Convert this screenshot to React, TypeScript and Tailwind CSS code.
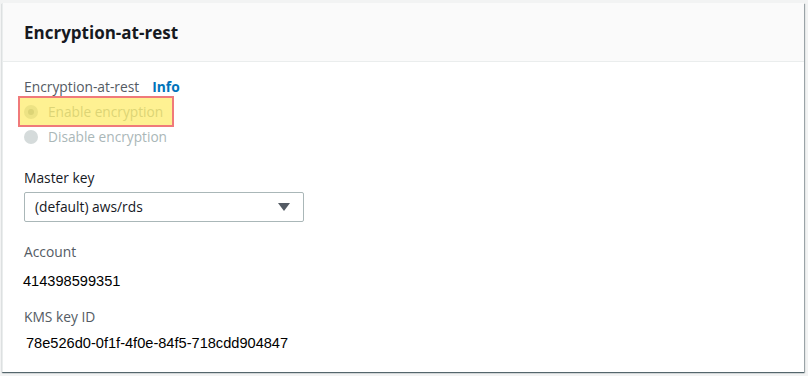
export default function App() {
  return (
    <div className="w-[808px] h-[376px] bg-[#f2f3f3] pl-[2px] pt-[3px] font-['Open_Sans','Liberation_Sans',sans-serif]">
      <div className="w-[802px] h-[369px] bg-white border-l border-[#eaeded] shadow-[0_1px_1px_0_rgba(0,28,36,0.5),1px_1px_1px_0_rgba(0,28,36,0.3)]">
        {/* header */}
        <div className="h-[59px] bg-[#fafafa] border-b border-[#eaeded] px-[21px] flex items-center">
          <h2 className="text-[17px] font-bold text-[#16191f] leading-none">Encryption-at-rest</h2>
        </div>

        <div className="px-[21px] pt-[16px]">
          {/* encryption radio group */}
          <div className="flex items-center gap-[13px] text-[13.8px] leading-[18px]">
            <span className="text-[#545b64]">Encryption-at-rest</span>
            <span className="font-bold text-[#0073bb]">Info</span>
          </div>
          <div className="relative mt-[7px] flex flex-col gap-[7px]">
            <div className="flex items-center gap-[10px] h-[18px]">
              <span className="w-[14px] h-[14px] rounded-full bg-[#d5dbdb] flex items-center justify-center">
                <span className="w-[6px] h-[6px] rounded-full bg-[#aab7b8]" />
              </span>
              <span className="text-[13.7px] text-[#aab7b8]">Enable encryption</span>
            </div>
            <div className="flex items-center gap-[10px] h-[18px]">
              <span className="w-[14px] h-[14px] rounded-full bg-[#d5dbdb]" />
              <span className="text-[13.7px] text-[#aab7b8]">Disable encryption</span>
            </div>
            {/* highlight annotation */}
            <div className="absolute left-[-6px] top-[-7px] w-[156px] h-[31px] bg-[#fde84a]/60 border-2 border-[#f07a7a]" />
          </div>

          {/* master key */}
          <div className="mt-[23px] text-[13.8px] leading-[18px] text-[#16191f]">Master key</div>
          <div className="mt-[5px] w-[280px] h-[30px] border border-[#aab7b8] rounded-[2px] flex items-center justify-between pl-[10px] pr-[13px]">
            <span className="text-[13.8px] text-[#16191f]">(default) aws/rds</span>
            <svg width="12" height="8" viewBox="0 0 12 8">
              <path d="M0 0 H12 L6 8 Z" fill="#545b64" />
            </svg>
          </div>

          {/* account */}
          <div className="mt-[21px] text-[13.8px] leading-[18px] text-[#545b64]">Account</div>
          <div className="mt-[11px] ml-[-1px] text-[14.6px] leading-[18px] text-black font-['Liberation_Sans',sans-serif]">414398599351</div>

          {/* kms key id */}
          <div className="mt-[18px] text-[13.8px] leading-[18px] text-[#545b64]">KMS key ID</div>
          <div className="mt-[8px] ml-[2px] text-[14.6px] leading-[18px] text-black font-['Liberation_Sans',sans-serif]">78e526d0-0f1f-4f0e-84f5-718cdd904847</div>
        </div>
      </div>
    </div>
  );
}
